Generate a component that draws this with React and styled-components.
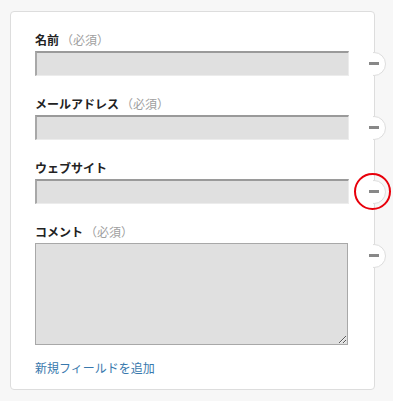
import React from 'react';
import styled, { createGlobalStyle } from 'styled-components';

const GlobalStyle = createGlobalStyle`
  html, body {
    margin: 0;
    padding: 0;
    background: #f7f7f7;
  }
  body {
    font-family: "Noto Sans CJK JP", "Noto Sans", sans-serif;
    color: #222;
  }
`;

const Page = styled.div`
  padding: 11px 20px 11px 10px;
`;

const Card = styled.div`
  width: 315px;
  background: #fff;
  border: 1px solid #ddd;
  border-radius: 4px;
  padding: 19px 24px 13px 24px;
  display: flex;
  flex-direction: column;
`;

const Field = styled.div`
  display: flex;
  flex-direction: column;
  gap: 3px;
  margin-bottom: ${(p) => (p.$last ? '14px' : '19px')};
`;

const Label = styled.label`
  display: block;
  height: 17px;
  font-size: 12px;
  line-height: 17px;
  font-weight: 700;
  color: #222;
`;

const Required = styled.span`
  font-weight: 400;
  color: #a0a0a0;
  margin-left: 2px;
`;

const InputWrap = styled.div`
  position: relative;
`;

const TextInput = styled.input`
  display: block;
  box-sizing: border-box;
  width: 314px;
  height: 25px;
  margin: 0;
  background: #e0e0e0;
  border-style: solid;
  border-width: 2px 1px 1px 2px;
  border-color: #9a9a9a #ececec #ececec #a8a8a8;
  outline: none;
`;

const TextArea = styled.textarea`
  display: block;
  box-sizing: border-box;
  width: 313px;
  height: 102px;
  margin: 0;
  background: #e0e0e0;
  border: 1px solid #a8a8a8;
  outline: none;
`;

const RemoveButton = styled.button`
  position: absolute;
  top: 1px;
  right: -36px;
  width: 24px;
  height: 24px;
  padding: 0;
  border: none;
  background: none;
  cursor: pointer;

  &::before {
    content: '';
    position: absolute;
    inset: 0;
    box-sizing: border-box;
    border-radius: 50%;
    background: #fff;
    border: 1px solid #ddd;
    clip-path: inset(0 0 0 11px);
  }

  &::after {
    content: '';
    position: absolute;
    left: 7px;
    top: 10px;
    width: 10px;
    height: 3px;
    background: #888;
  }
`;

const Highlight = styled.span`
  position: absolute;
  left: -8px;
  top: -7px;
  width: 37px;
  height: 37px;
  box-sizing: border-box;
  border: 2.5px solid #e8000b;
  border-radius: 50%;
  pointer-events: none;
`;

const AddLink = styled.a`
  display: block;
  font-size: 12px;
  line-height: 17px;
  color: #3878ad;
  text-decoration: none;
`;

const fields = [
  { label: '名前', required: true },
  { label: 'メールアドレス', required: true },
  { label: 'ウェブサイト', required: false, highlighted: true },
  { label: 'コメント', required: true, multiline: true },
];

export default function App() {
  return (
    <Page>
      <GlobalStyle />
      <Card>
        {fields.map((f, i) => (
          <Field key={f.label} $last={i === fields.length - 1}>
            <Label>
              {f.label}
              {f.required && <Required>（必須）</Required>}
            </Label>
            <InputWrap>
              {f.multiline ? <TextArea /> : <TextInput type="text" />}
              <RemoveButton aria-label="削除">
                {f.highlighted && <Highlight />}
              </RemoveButton>
            </InputWrap>
          </Field>
        ))}
        <AddLink href="#">新規フィールドを追加</AddLink>
      </Card>
    </Page>
  );
}
